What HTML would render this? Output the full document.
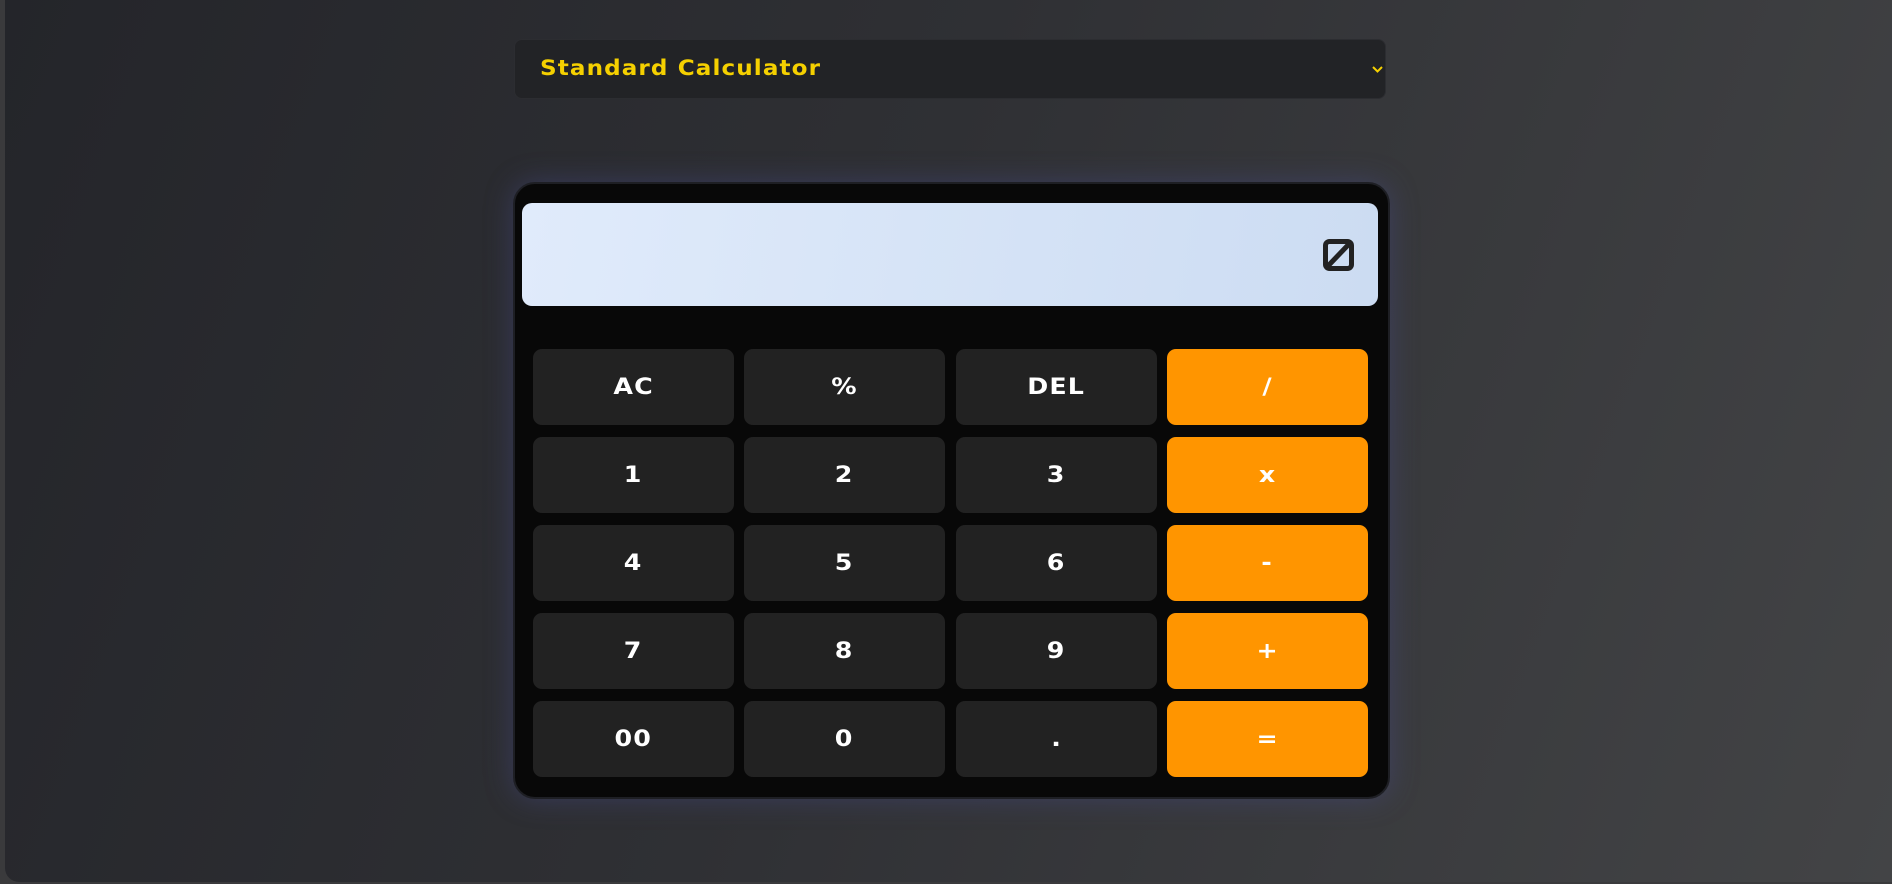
<!DOCTYPE html>
<html><head><meta charset="utf-8"><style>
html,body{margin:0;padding:0;width:1892px;height:884px;overflow:hidden;background:#3a3a3c;}
.page{position:absolute;left:5px;top:0;width:1887px;height:882px;border-radius:0 0 0 14px;background:linear-gradient(110deg,#24252a 0%,#2f3034 45%,#434446 100%);}
.sel{position:absolute;left:514px;top:39px;width:872px;height:60px;background:#222326;border:1px solid #2c2d31;border-radius:8px;box-sizing:border-box;}
.sel span{position:absolute;left:25px;top:16px;color:#f5d000;font:bold 21px "DejaVu Sans","Liberation Sans",sans-serif;letter-spacing:1px;transform:scaleX(1.1);transform-origin:left;}
.chev{position:absolute;left:1372px;top:66px;}
.card{position:absolute;left:513px;top:182px;width:877px;height:617px;background:#080808;border:2px solid #1e1f24;border-radius:22px;box-sizing:border-box;box-shadow:0 0 28px rgba(70,75,140,.45);}
.disp{position:absolute;left:522px;top:203px;width:856px;height:103px;border-radius:10px;background:linear-gradient(100deg,#e0ebfb,#ccdcf2);}
.icon{position:absolute;left:1323px;top:239px;}
.b{position:absolute;width:201px;height:76px;border-radius:9px;background:#222;color:#fff;font:bold 22px "DejaVu Sans","Liberation Sans",sans-serif;display:flex;align-items:center;justify-content:center;}
.b span{display:inline-block;transform:scaleX(1.15);letter-spacing:1px;}
.o{background:#ff9500;}
</style></head><body>
<div class="page"></div>
<div class="sel"><span>Standard Calculator</span></div>
<svg class="chev" width="11" height="7" viewBox="0 0 11 7"><path d="M1 1 L5.5 5.5 L10 1" fill="none" stroke="#f5d000" stroke-width="2"/></svg>
<div class="card"></div>
<div class="disp"></div>
<svg class="icon" width="31" height="32" viewBox="0 0 31 32"><rect x="2.5" y="2.5" width="26" height="27" rx="4" fill="none" stroke="#222" stroke-width="5"/><line x1="4" y1="28" x2="27" y2="4" stroke="#222" stroke-width="5"/></svg>
<div class="b" style="left:533px;top:349px"><span>AC</span></div>
<div class="b" style="left:744px;top:349px"><span>%</span></div>
<div class="b" style="left:956px;top:349px"><span>DEL</span></div>
<div class="b o" style="left:1167px;top:349px"><span>/</span></div>
<div class="b" style="left:533px;top:437px"><span>1</span></div>
<div class="b" style="left:744px;top:437px"><span>2</span></div>
<div class="b" style="left:956px;top:437px"><span>3</span></div>
<div class="b o" style="left:1167px;top:437px"><span>x</span></div>
<div class="b" style="left:533px;top:525px"><span>4</span></div>
<div class="b" style="left:744px;top:525px"><span>5</span></div>
<div class="b" style="left:956px;top:525px"><span>6</span></div>
<div class="b o" style="left:1167px;top:525px"><span>-</span></div>
<div class="b" style="left:533px;top:613px"><span>7</span></div>
<div class="b" style="left:744px;top:613px"><span>8</span></div>
<div class="b" style="left:956px;top:613px"><span>9</span></div>
<div class="b o" style="left:1167px;top:613px"><span>+</span></div>
<div class="b" style="left:533px;top:701px"><span>00</span></div>
<div class="b" style="left:744px;top:701px"><span>0</span></div>
<div class="b" style="left:956px;top:701px"><span>.</span></div>
<div class="b o" style="left:1167px;top:701px"><span>=</span></div>
</body></html>
